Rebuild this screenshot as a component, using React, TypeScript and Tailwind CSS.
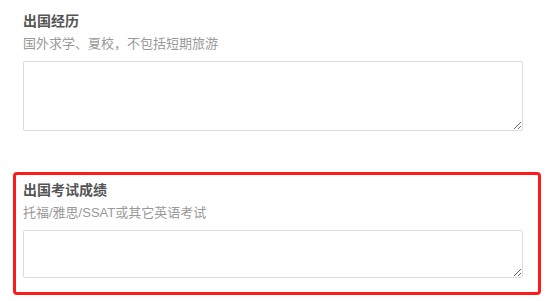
const font = { fontFamily: '"Liberation Sans", "Noto Sans CJK SC", sans-serif' };

function Field({ title, hint, rows }: { title: string; hint: string; rows: string }) {
  return (
    <>
      <div className="text-[14px] leading-[20px] font-bold text-[#555]">{title}</div>
      <div className="mt-[3px] text-[13px] leading-[20px] text-[#999]">{hint}</div>
      <textarea
        className={`mt-[7px] block w-[500px] ${rows} rounded-[2px] border border-[#dcdcdc] bg-white outline-none`}
      />
    </>
  );
}

export default function App() {
  return (
    <div className="h-[301px] w-[558px] overflow-hidden bg-white" style={font}>
      <div className="px-[23px] pt-[11px]">
        <Field title="出国经历" hint="国外求学、夏校，不包括短期旅游" rows="h-[70px]" />
      </div>
      <div className="mt-[41px] ml-[13px] w-[528px] rounded-[4px] border-[3px] border-[#ff1a1a] pt-[5px] pb-[14px] pl-[7px]">
        <Field title="出国考试成绩" hint="托福/雅思/SSAT或其它英语考试" rows="h-[48px]" />
      </div>
    </div>
  );
}
